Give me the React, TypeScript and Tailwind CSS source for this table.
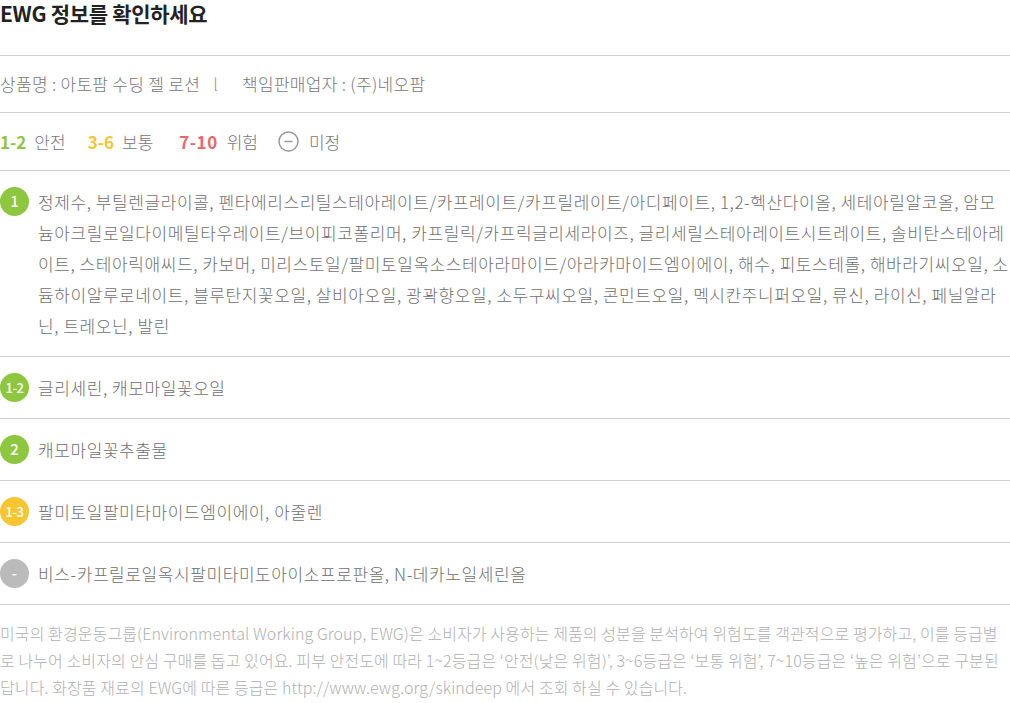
import React from "react";

const font = { fontFamily: '"Noto Sans CJK KR", "Noto Sans", sans-serif' };

function Badge({ label, color }: { label: string; color: string }) {
  return (
    <div
      className={`w-[29px] h-[29px] rounded-full flex items-center justify-center text-white shrink-0 font-medium ${color} ${label.length > 1 ? "text-[13px] tracking-[-0.5px]" : "text-[15px]"}`}
    >
      {label}
    </div>
  );
}

function Row({ label, color, text }: { label: string; color: string; text: string }) {
  return (
    <div className="flex items-start gap-[9px] py-[15px] border-b border-[#cfcfcf]">
      <div className="pt-[1px]">
        <Badge label={label} color={color} />
      </div>
      <div className="text-[17px] leading-[31px] text-[#707070] font-light tracking-[0.58px]">{text}</div>
    </div>
  );
}

export default function App() {
  return (
    <div className="w-[1010px] bg-white" style={font}>
      <div className="h-[56px] border-b border-[#cfcfcf]">
        <h1 className="text-[21px] leading-[26px] font-bold text-[#222] tracking-[-0.3px]">EWG 정보를 확인하세요</h1>
      </div>
      <div className="h-[57px] flex items-center border-b border-[#cfcfcf] text-[17px] text-[#777] font-light tracking-[0.3px]">
        <span>상품명 : 아토팜 수딩 젤 로션</span>
        <span className="ml-[13px] mr-[24px] text-[#999]">l</span>
        <span>책임판매업자 : (주)네오팜</span>
      </div>
      <div className="h-[58px] flex items-center border-b border-[#cfcfcf] text-[17px] text-[#777] font-light">
        <span className="font-bold text-[#8dc63f] mr-[8px]">1-2</span>
        <span className="mr-[22px]">안전</span>
        <span className="font-bold text-[#f7c531] mr-[8px]">3-6</span>
        <span className="mr-[26px]">보통</span>
        <span className="font-bold text-[#e8686b] mr-[9px] tracking-[0.5px]">7-10</span>
        <span className="mr-[20px]">위험</span>
        <svg width="21" height="21" viewBox="0 0 21 21" className="mr-[10px]">
          <circle cx="10.5" cy="10.5" r="9.5" fill="none" stroke="#999" strokeWidth="1.5" />
          <line x1="6.5" y1="10.5" x2="14.5" y2="10.5" stroke="#999" strokeWidth="1.5" />
        </svg>
        <span>미정</span>
      </div>
      <Row
        label="1"
        color="bg-[#8dc63f]"
        text="정제수, 부틸렌글라이콜, 펜타에리스리틸스테아레이트/카프레이트/카프릴레이트/아디페이트, 1,2-헥산다이올, 세테아릴알코올, 암모늄아크릴로일다이메틸타우레이트/브이피코폴리머, 카프릴릭/카프릭글리세라이즈, 글리세릴스테아레이트시트레이트, 솔비탄스테아레이트, 스테아릭애씨드, 카보머, 미리스토일/팔미토일옥소스테아라마이드/아라카마이드엠이에이, 해수, 피토스테롤, 해바라기씨오일, 소듐하이알루로네이트, 블루탄지꽃오일, 살비아오일, 광곽향오일, 소두구씨오일, 콘민트오일, 멕시칸주니퍼오일, 류신, 라이신, 페닐알라닌, 트레오닌, 발린"
      />
      <Row label="1-2" color="bg-[#8dc63f]" text="글리세린, 캐모마일꽃오일" />
      <Row label="2" color="bg-[#8dc63f]" text="캐모마일꽃추출물" />
      <Row label="1-3" color="bg-[#f7c531]" text="팔미토일팔미타마이드엠이에이, 아줄렌" />
      <Row label="-" color="bg-[#bbbbbb]" text="비스-카프릴로일옥시팔미타미도아이소프로판올, N-데카노일세린올" />
      <p className="pt-[15px] text-[16px] leading-[27px] text-[#b0b0b0] font-light tracking-[0.1px]">
        미국의 환경운동그룹(Environmental Working Group, EWG)은 소비자가 사용하는 제품의 성분을 분석하여 위험도를 객관적으로 평가하고, 이를 등급별로 나누어 소비자의 안심 구매를 돕고 있어요. 피부 안전도에 따라 1~2등급은 ‘안전(낮은 위험)’, 3~6등급은 ‘보통 위험’, 7~10등급은 ‘높은 위험’으로 구분된답니다. 화장품 재료의 EWG에 따른 등급은 http://www.ewg.org/skindeep 에서 조회 하실 수 있습니다.
      </p>
    </div>
  );
}
